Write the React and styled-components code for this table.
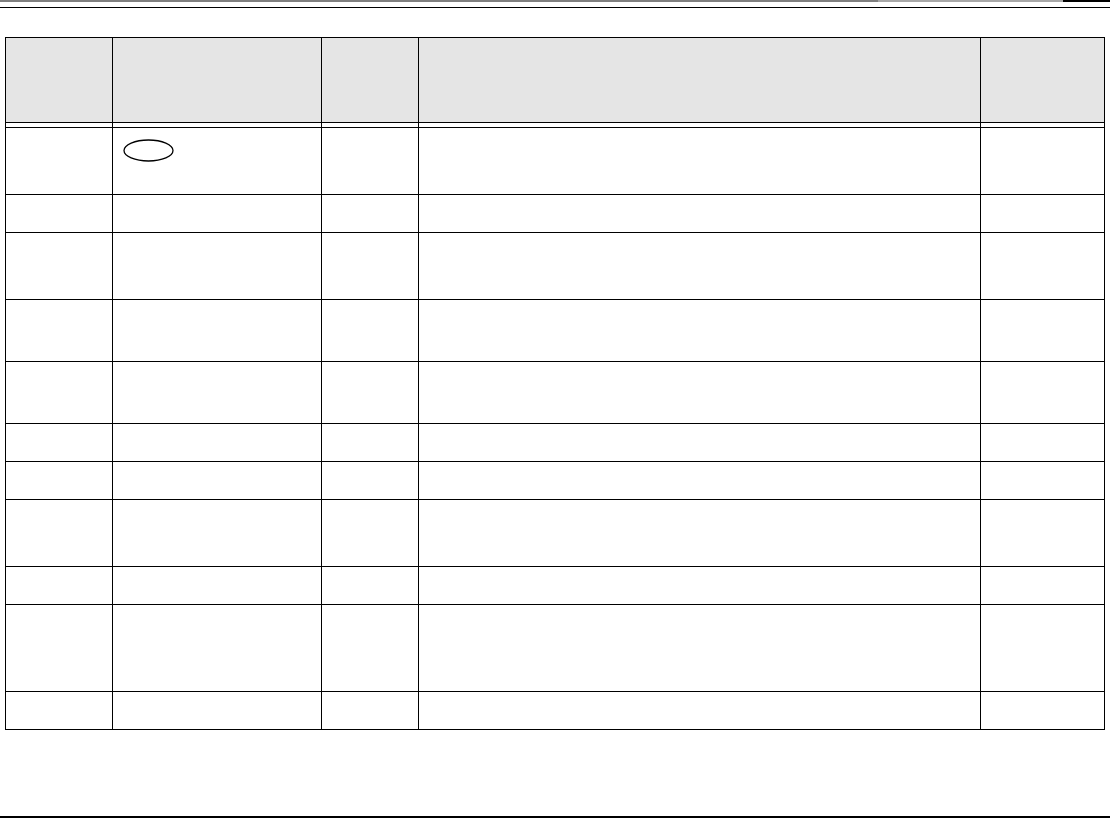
import React from "react";
import styled, { createGlobalStyle } from "styled-components";

const Global = createGlobalStyle`
  html, body { margin: 0; padding: 0; background: #fff; }
  body { font-family: "Liberation Sans", Arial, sans-serif; }
`;

const Page = styled.div`
  width: 1110px;
  height: 819px;
  display: flex;
  flex-direction: column;
  overflow: hidden;
`;

const TopBand = styled.div`
  height: 2px;
  display: flex;
`;

const BandSeg = styled.div`
  height: 100%;
  width: ${(p) => p.$w}px;
  background: ${(p) => p.$c};
`;

const Rule = styled.div`
  height: ${(p) => p.$h}px;
  margin-top: ${(p) => p.$mt}px;
  background: #000;
  width: 100%;
`;

const Table = styled.div`
  margin-top: 29px;
  margin-left: 5px;
  width: 1100px;
  border-top: 1px solid #000;
  border-left: 1px solid #000;
  display: flex;
  flex-direction: column;
  box-sizing: border-box;
`;

const Row = styled.div`
  display: flex;
  height: ${(p) => p.$h}px;
`;

const Cell = styled.div`
  box-sizing: border-box;
  width: ${(p) => p.$w}px;
  height: 100%;
  border-right: 1px solid #000;
  border-bottom: 1px solid #000;
  background: ${(p) => (p.$head ? "#e5e5e5" : "#fff")};
  padding: ${(p) => p.$pad || "0"};
`;

const Oval = styled.svg`
  display: block;
  width: 51px;
  height: 23px;
`;

const COLS = [107, 209, 97, 562, 124];
const ROWS = [67, 38, 67, 62, 62, 38, 38, 67, 38, 87, 38];

export default function App() {
  return (
    <>
      <Global />
      <Page>
        <TopBand>
          <BandSeg $w={878} $c="#7f7f7f" />
          <BandSeg $w={185} $c="#a8a8a8" />
          <BandSeg $w={47} $c="#000" />
        </TopBand>
        <Rule $h={1} $mt={5} />
        <Table>
          <Row $h={85}>
            {COLS.map((w, i) => (
              <Cell key={i} $w={w} $head />
            ))}
          </Row>
          <Row $h={5}>
            {COLS.map((w, i) => (
              <Cell key={i} $w={w} />
            ))}
          </Row>
          {ROWS.map((h, r) => (
            <Row key={r} $h={h}>
              {COLS.map((w, i) => (
                <Cell key={i} $w={w} $pad={r === 0 && i === 1 ? "11px 0 0 10px" : "0"}>
                  {r === 0 && i === 1 && (
                    <Oval viewBox="0 0 51 23">
                      <ellipse cx="25.5" cy="11.5" rx="24.5" ry="10.5" fill="none" stroke="#000" strokeWidth="1.3" />
                    </Oval>
                  )}
                </Cell>
              ))}
            </Row>
          ))}
        </Table>
        <Rule $h={2} $mt={86} />
      </Page>
    </>
  );
}
